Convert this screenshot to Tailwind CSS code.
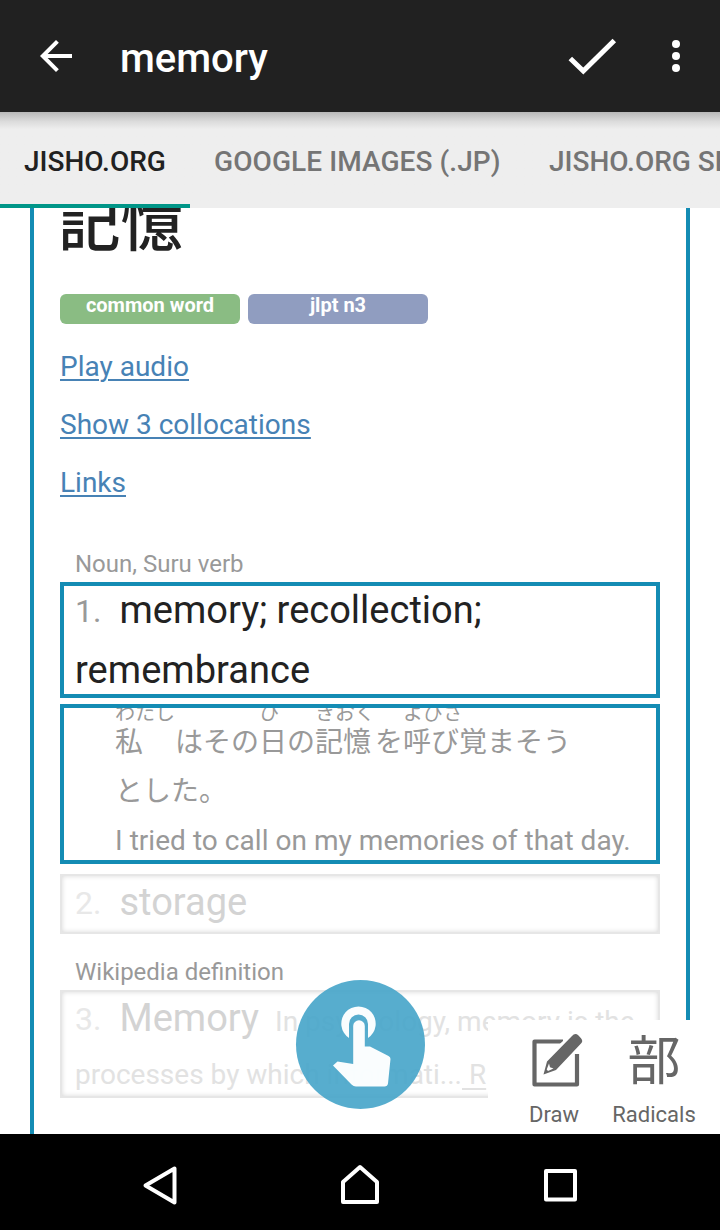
<!DOCTYPE html>
<html lang="en">
<head>
<meta charset="utf-8">
<meta name="viewport" content="width=720">
<title>memory</title>
<script src="https://cdn.jsdelivr.net/npm/@tailwindcss/browser@4"></script>
</head>
<body class="relative flex h-[1230px] w-[720px] flex-col overflow-hidden bg-white font-[Roboto,'Noto_Sans_CJK_JP',sans-serif] whitespace-nowrap">
  <header class="flex h-28 shrink-0 items-center bg-[#212121] text-white">
    <svg class="ml-8 size-12" viewBox="0 0 24 24" fill="currentColor"><path d="M20 11H7.830l5.590-5.590L12 4l-8 8 8 8 1.410-1.410L7.830 13H20v-2z"/></svg>
    <h1 class="mt-1.5 ml-10 text-[40px] leading-none font-medium">memory</h1>
    <svg class="ml-auto h-12 w-14" viewBox="0 0 56 48" fill="none" stroke="currentColor" stroke-width="5"><path d="M6.300 26.500 19.300 39 50.300 8.500"/></svg>
    <svg class="mr-5 ml-8 size-12" viewBox="0 0 24 24" fill="currentColor"><circle cx="12" cy="6" r="2"/><circle cx="12" cy="12" r="2"/><circle cx="12" cy="18" r="2"/></svg>
  </header>

  <nav class="flex h-24 w-[720px] shrink-0 overflow-hidden bg-[#eee] bg-linear-to-b from-[#b8b8b8] from-0% via-[#dcdcdc] via-10% to-[#eee] to-18% text-[28px] font-medium text-[#757575]">
    <a class="w-[190px] shrink-0 border-b-4 border-[#009688] px-6 pt-[29px] leading-[42px] text-[#212121]">JISHO.ORG</a>
    <a class="w-[335px] shrink-0 px-6 pt-[29px] leading-[42px] tracking-[0.08px]">GOOGLE IMAGES (.JP)</a>
    <a class="shrink-0 px-6 pt-[29px] leading-[42px]">JISHO.ORG SENTENCES</a>
  </nav>

  <main class="mx-[30px] flex h-[926px] shrink-0 flex-col overflow-hidden border-x-4 border-[#148cb4] px-[26px]">
    <h2 class="-mt-[13px] -ml-0.5 h-[60px] shrink-0 text-[62.500px] leading-[60px] font-medium text-[#222]">記憶</h2>
    <div class="mt-[39px] flex shrink-0 gap-2 text-center text-[20px] leading-[22px] font-bold text-white">
      <span class="h-[30px] w-[180px] rounded-md bg-[#8abc83]">common word</span>
      <span class="h-[30px] w-[180px] rounded-md bg-[#909dc0]">jlpt n3</span>
    </div>
    <div class="mt-[14px] flex shrink-0 flex-col text-[28px] leading-[58px] text-[#4782b5] underline decoration-2 underline-offset-3">
      <a>Play audio</a><a>Show 3 collocations</a><a>Links</a>
    </div>
    <p class="mt-[37px] shrink-0 pl-[15px] text-[24px] leading-[30px] text-[#999]">Noun, Suru verb</p>
    <section class="mt-[3px] h-[116px] shrink-0 border-4 border-[#148cb4] pl-[11px]">
      <p class="-mt-1.5 text-[38px] leading-[60px] text-[#222]"><span class="relative -top-px inline-block w-[44.500px] text-[32px] leading-none text-[#999]">1.</span>memory; recollection;<br><span class="tracking-[0.050px]">remembrance</span></p>
    </section>
    <section class="mt-1.5 h-40 shrink-0 overflow-hidden border-4 border-[#148cb4] pl-[51px] text-[28px] leading-[50px] text-[#999]">
      <p class="mt-2.5 flex h-[49px]"><span class="relative w-[60px]">私<span class="absolute -top-[17px] left-0 text-[20px] leading-6">わたし</span></span>はその<span class="relative">日<span class="absolute -top-[17px] left-0 text-[20px] leading-6">ひ</span></span>の<span class="relative w-[60px]">記憶<span class="absolute -top-[17px] left-0 text-[20px] leading-6">きおく</span></span>を<span class="relative">呼び覚<span class="absolute -top-[17px] left-0 text-[20px] leading-6">よびさ</span></span>まそう</p>
      <p class="h-[49px]">とした。</p>
      <p class="tracking-[0.040px]">I tried to call on my memories of that day.</p>
    </section>
    <section class="mt-2.5 h-[60px] shrink-0 border-2 border-[#e6e6e6] pl-[13px] shadow-[inset_0_0_5px_#d8d8d8]">
      <p class="-mt-1 text-[38px] leading-[60px] text-[#d3d3d3]"><span class="relative -top-px inline-block w-[44.500px] text-[32px] leading-none text-[#e8e8e8]">2.</span>storage</p>
    </section>
    <p class="mt-[23px] shrink-0 pl-[15px] text-[24px] leading-[30px] text-[#999]">Wikipedia definition</p>
    <section class="mt-[3px] h-[108px] shrink-0 border-2 border-[#e6e6e6] pl-[13px] shadow-[inset_0_0_5px_#d8d8d8]">
      <p class="-mt-1 text-[38px] leading-[60px] text-[#d3d3d3]"><span class="relative -top-px inline-block w-[44.500px] text-[32px] leading-none text-[#e8e8e8]">3.</span>Memory<span class="ml-4 text-[28px] text-[#e2e2e2]">In psychology, memory is the</span></p>
      <p class="-mt-1 text-[28px] leading-[54px] text-[#e2e2e2]">processes by which informati...<span class="underline decoration-2 underline-offset-4">&nbsp;R</span></p>
    </section>
  </main>

  <footer class="flex h-24 shrink-0 justify-between bg-black px-[136px]">
    <svg class="mt-[26px] size-12" viewBox="0 0 48 48" fill="none" stroke="#fff" stroke-width="4" stroke-linejoin="round"><path d="M38.500 8.500v34L9.500 25.500z"/></svg>
    <svg class="mt-[26px] size-12" viewBox="0 0 48 48" fill="none" stroke="#fff" stroke-width="4" stroke-linejoin="round"><path d="M7 42V22L24 7l17 15v20z"/></svg>
    <svg class="mt-[26px] size-12" viewBox="0 0 48 48" fill="none" stroke="#fff" stroke-width="4" stroke-linejoin="round"><path d="M10 11h29v28.500H10z"/></svg>
  </footer>

  <aside class="absolute top-[1020px] left-[488px] flex h-[114px] w-[232px] bg-white text-[#666]">
    <div class="flex w-[132px] flex-col items-center">
      <svg class="mt-3 size-[58px]" viewBox="0 0 58 58" fill="none"><path stroke="currentColor" d="M38 9.500H9.500V52.500H52V22" stroke-width="4.200" stroke-linejoin="round"/><path stroke="#fff" stroke-width="3.500" d="M19 29 46 4l9 9L30 39z"/><path fill="currentColor" d="M18.500 42.500 22 29.500 47 4Q50 .5 53.500 3.500L56 6.200Q58.500 9 56 11.500L31 38z"/><path fill="#fff" d="m24 31.500 1 3.800 3.500 1.200-5.500 2.500-1.300-1.500z"/></svg>
      <span class="mt-[11px] text-[22px] leading-7">Draw</span>
    </div>
    <div class="flex w-[68px] flex-col items-center">
      <span class="mt-3.5 text-[53px] leading-[56px]">部</span>
      <span class="mt-[11px] text-[22px] leading-7">Radicals</span>
    </div>
  </aside>

  <div class="absolute top-[979.500px] left-[295.500px] size-[129px] rounded-full bg-[#46a5c9]/91">
    <svg class="size-full" viewBox="0 0 129 129" fill="#fff" fill-opacity=".97"><path d="M53 58A17.200 17.200 0 1 1 72 58V44a9.500 9.500 0 0 0-19 0z"/><path d="M57.200 84V46a5.800 5.800 0 0 1 11.600 0V66.500H74L92.500 76Q94.500 77 94.500 79L92 103.500Q91.500 106.500 88.500 106.500H60Q57.500 106.500 55.500 104.500L37 85.500 41.500 81.500z"/></svg>
  </div>
</body>
</html>
